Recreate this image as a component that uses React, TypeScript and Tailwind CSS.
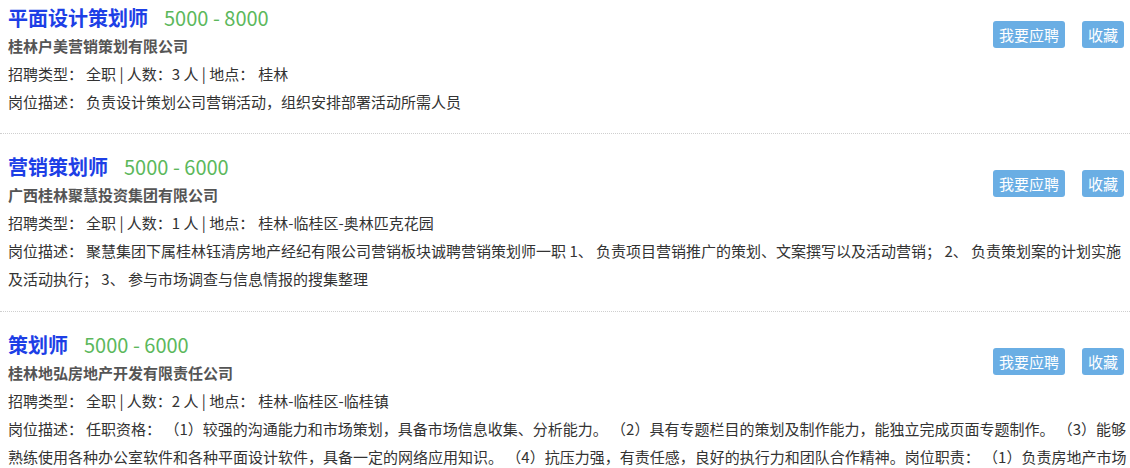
type Job = {
  title: string;
  salary: string;
  company: string;
  count: number;
  place: string;
  desc: string;
};

const jobs: Job[] = [
  {
    title: "平面设计策划师",
    salary: "5000 - 8000",
    company: "桂林户美营销策划有限公司",
    count: 3,
    place: "桂林",
    desc: "负责设计策划公司营销活动，组织安排部署活动所需人员",
  },
  {
    title: "营销策划师",
    salary: "5000 - 6000",
    company: "广西桂林聚慧投资集团有限公司",
    count: 1,
    place: "桂林-临桂区-奥林匹克花园",
    desc: "聚慧集团下属桂林钰清房地产经纪有限公司营销板块诚聘营销策划师一职 1、 负责项目营销推广的策划、文案撰写以及活动营销； 2、 负责策划案的计划实施及活动执行； 3、 参与市场调查与信息情报的搜集整理",
  },
  {
    title: "策划师",
    salary: "5000 - 6000",
    company: "桂林地弘房地产开发有限责任公司",
    count: 2,
    place: "桂林-临桂区-临桂镇",
    desc: "任职资格： （1）较强的沟通能力和市场策划，具备市场信息收集、分析能力。 （2）具有专题栏目的策划及制作能力，能独立完成页面专题制作。 （3）能够熟练使用各种办公室软件和各种平面设计软件，具备一定的网络应用知识。 （4）抗压力强，有责任感，良好的执行力和团队合作精神。岗位职责： （1）负责房地产市场调研，收集竞争项目信息，撰写市场分析报告。",
  },
];

const JobItem = ({ job, first }: { job: Job; first: boolean }) => (
  <div
    className={`flow-root border-b border-dotted border-[#cfcfcf] pl-2 ${
      first ? "pt-1 pb-[17px]" : "pt-[19px] pb-[18px]"
    }`}
  >
    {/* Actions */}
    <div className="float-right mt-[17px] mr-[6px] flex gap-[17px]">
      <button className="h-[27px] rounded-[3px] bg-[#6aaee4] px-[6px] text-[15px] leading-[27px] text-white">
        我要应聘
      </button>
      <button className="h-[27px] rounded-[3px] bg-[#6aaee4] px-[6px] text-[15px] leading-[27px] text-white">
        收藏
      </button>
    </div>

    <div className="text-[20px] leading-[28px]">
      <span className="font-bold text-[#1d3fe6]">{job.title}</span>
      <span className="ml-4 text-[#5cb85c]">{job.salary}</span>
    </div>
    <p className="text-[15px] font-bold leading-[28px] text-[#555]">{job.company}</p>
    <p className="text-[15px] leading-[28px]">
      招聘类型：<span className="ml-[3px]">全职</span> | 人数：{job.count} 人 | 地点：
      <span className="ml-1">{job.place}</span>
    </p>
    <p className="text-[15px] leading-[28px]">
      岗位描述：<span className="ml-[3px]">{job.desc}</span>
    </p>
  </div>
);

export default function App() {
  return (
    <div className="min-h-screen bg-white font-['Microsoft_YaHei','Noto_Sans_CJK_SC',sans-serif] text-[#333]">
      {jobs.map((job, i) => (
        <JobItem key={job.title} job={job} first={i === 0} />
      ))}
    </div>
  );
}
